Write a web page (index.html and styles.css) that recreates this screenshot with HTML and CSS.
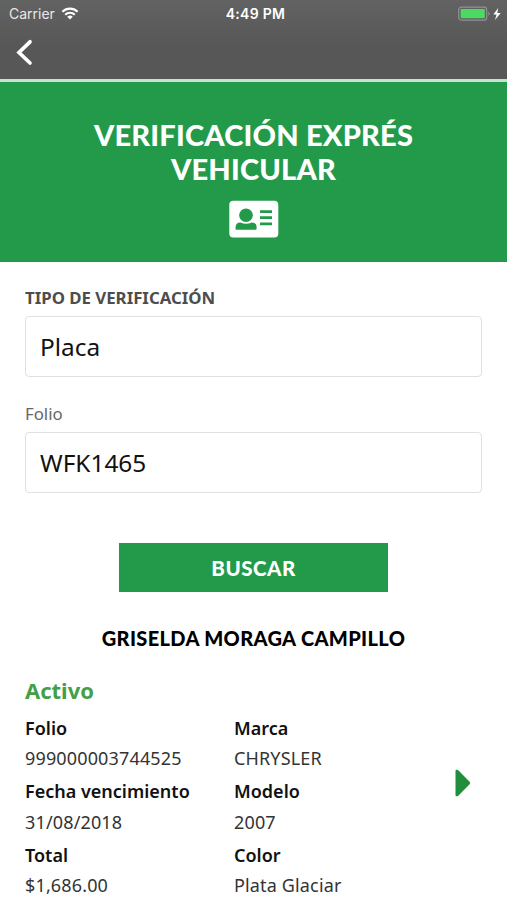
FILE: index.html
```html
<!DOCTYPE html>
<html lang="es">
<head>
  <meta charset="UTF-8" />
  <meta name="viewport" content="width=device-width, initial-scale=1.0"/>
  <title>Verificación Exprés Vehicular</title>
  <link rel="stylesheet" href="styles.css">
</head>
<body>
  <header class="topbar">
    <div class="status-bar">
      <div class="carrier">
        <span>Carrier</span>
        <svg class="wifi" viewBox="0 0 18 13" width="18" height="13">
          <path d="M1.4 4.8a10.8 10.8 0 0 1 15.2 0M4.2 7.7a6.8 6.8 0 0 1 9.6 0" fill="none" stroke="#fff" stroke-width="2.1"/>
          <path d="M9 12.6 6.2 9.8a4 4 0 0 1 5.6 0z" fill="#fff"/>
        </svg>
      </div>
      <span class="time">4:49 PM</span>
      <div class="power">
        <svg viewBox="0 0 44 16" width="44" height="16">
          <rect x=".7" y="1.2" width="28" height="13" rx="2.8" fill="none" stroke="#929292" stroke-width="1.2"/>
          <rect x="2.6" y="3.1" width="24.2" height="9.2" rx="1" fill="#4cd964"/>
          <path d="M30.3 5.8q3 2 0 4z" fill="#929292"/>
          <path d="M40.2 2 35.4 8.6h3.1L37 14l5.7-7h-3.4z" fill="#fff"/>
        </svg>
      </div>
    </div>
    <a class="back" href="#" aria-label="Regresar">
      <svg viewBox="0 0 18 28" width="18" height="28">
        <path d="M15 3.8 4 14.5 15 25" fill="none" stroke="#fff" stroke-width="3.7" stroke-linecap="round"/>
      </svg>
    </a>
  </header>

  <section class="banner">
    <h1>VERIFICACIÓN EXPRÉS<br>VEHICULAR</h1>
    <svg viewBox="0 0 50 38" width="50" height="38">
      <rect x=".3" y=".8" width="49" height="36.8" rx="4" fill="#fff"/>
      <circle cx="17" cy="15.3" r="6.8" fill="#229a49"/>
      <path d="M6.6 29.8v-2.6q0-4.7 4.8-4.8 5.500 2.700 11.400 0 4.800.1 4.800 4.800v1.500q0 1.100-1.100 1.100z" fill="#229a49"/>
      <path d="M31 11.6h12M31 17.7h12M31 23.8h12" stroke="#229a49" stroke-width="2.7"/>
    </svg>
  </section>

  <main>
    <form>
      <div class="form-group">
        <label class="strong" for="tipo">TIPO DE VERIFICACIÓN</label>
        <input type="text" id="tipo" value="Placa" />
      </div>
      <div class="form-group">
        <label for="folio">Folio</label>
        <input type="text" id="folio" value="WFK1465" />
      </div>
      <button class="btn" type="button">BUSCAR</button>
    </form>

    <h2>GRISELDA MORAGA CAMPILLO</h2>

    <section class="result">
      <h3>Activo</h3>
      <div class="result-body">
        <dl>
          <dt>Folio</dt>
          <dd>999000003744525</dd>
          <dt>Fecha vencimiento</dt>
          <dd>31/08/2018</dd>
          <dt>Total</dt>
          <dd>$1,686.00</dd>
        </dl>
        <dl>
          <dt>Marca</dt>
          <dd>CHRYSLER</dd>
          <dt>Modelo</dt>
          <dd>2007</dd>
          <dt>Color</dt>
          <dd>Plata Glaciar</dd>
        </dl>
        <svg class="arrow" viewBox="0 0 16 28" width="16" height="28">
          <path d="M.5 2Q.5.5 2 .8q1 .2 1.800 1l10.800 10.900q1.200 1.300 0 2.600L3.800 26.200Q3 27 2 27.200.5 27.500.5 26z" fill="#208e3b"/>
        </svg>
      </div>
    </section>
  </main>
</body>
</html>
```
FILE: styles.css
```css
* {
  box-sizing: border-box;
}

body {
  margin: 0;
  height: 900px;
  overflow: hidden;
  background: #fff;
  font-family: 'Noto Sans', sans-serif;
}

svg {
  display: block;
}

/* Top bar */
.topbar {
  height: 82px;
  background: linear-gradient(#626262, #575757 60%);
  border-bottom: 3px solid #c5e4d0;
  color: #fff;
}

.status-bar {
  display: grid;
  grid-template-columns: 1fr auto 1fr;
  align-items: center;
  height: 27px;
  padding: 0 5px 0 9px;
  font-family: Inter, sans-serif;
  font-size: 14px;
}

.carrier {
  display: flex;
  align-items: center;
  gap: 6px;
  color: #e8e8e8;
}

.time {
  font-size: 14px;
  font-weight: 600;
  letter-spacing: 0.3px;
}

.power {
  justify-self: end;
}

.back {
  display: block;
  width: 18px;
  margin: 11px 0 0 15px;
}

/* Green banner */
.banner {
  display: flex;
  flex-direction: column;
  align-items: center;
  height: 180px;
  padding-top: 36px;
  background: #229a49;
}

h1 {
  margin: 0 0 14px;
  font-family: Lato, sans-serif;
  font-size: 29px;
  font-weight: 900;
  line-height: 34px;
  letter-spacing: 0.2px;
  text-align: center;
  color: #fff;
}

/* Form */
main {
  padding: 24px 25px 0;
}

.form-group {
  margin-bottom: 25px;
}

label {
  display: block;
  height: 30px;
  line-height: 24px;
  font-size: 16.8px;
  color: #666;
}

.strong {
  font-weight: 700;
  color: #4d4d4d;
}

input {
  display: block;
  width: 100%;
  height: 61px;
  padding: 0 14px;
  border: 1px solid #e0e0e0;
  border-radius: 4px;
  background: #fff;
  font-family: inherit;
  font-size: 24.4px;
  color: #111;
}

.btn {
  display: block;
  width: 269px;
  height: 49px;
  margin: 50px auto 0;
  padding: 0;
  border: none;
  background: #229a49;
  font-family: Lato, sans-serif;
  font-size: 20.5px;
  font-weight: 900;
  letter-spacing: 0.5px;
  color: #fff;
}

h2 {
  margin: 32px 0 0;
  font-family: Lato, sans-serif;
  font-size: 20px;
  font-weight: 900;
  line-height: 28px;
  letter-spacing: 0.35px;
  text-align: center;
  color: #000;
}

/* Result */
h3 {
  margin: 23px 0 7.6px;
  font-size: 22px;
  font-weight: 700;
  line-height: 30px;
  color: #43a047;
}

.result-body {
  display: grid;
  grid-template-columns: 209px 221px 16px;
}

dl {
  margin: 0;
  font-size: 18px;
}

dt {
  height: 30.5px;
  line-height: 30px;
  font-weight: 600;
  color: #111;
}

dd {
  height: 33px;
  margin: 0;
  line-height: 30px;
  letter-spacing: 0.15px;
  color: #333;
}

.arrow {
  margin-top: 56px;
}
```
